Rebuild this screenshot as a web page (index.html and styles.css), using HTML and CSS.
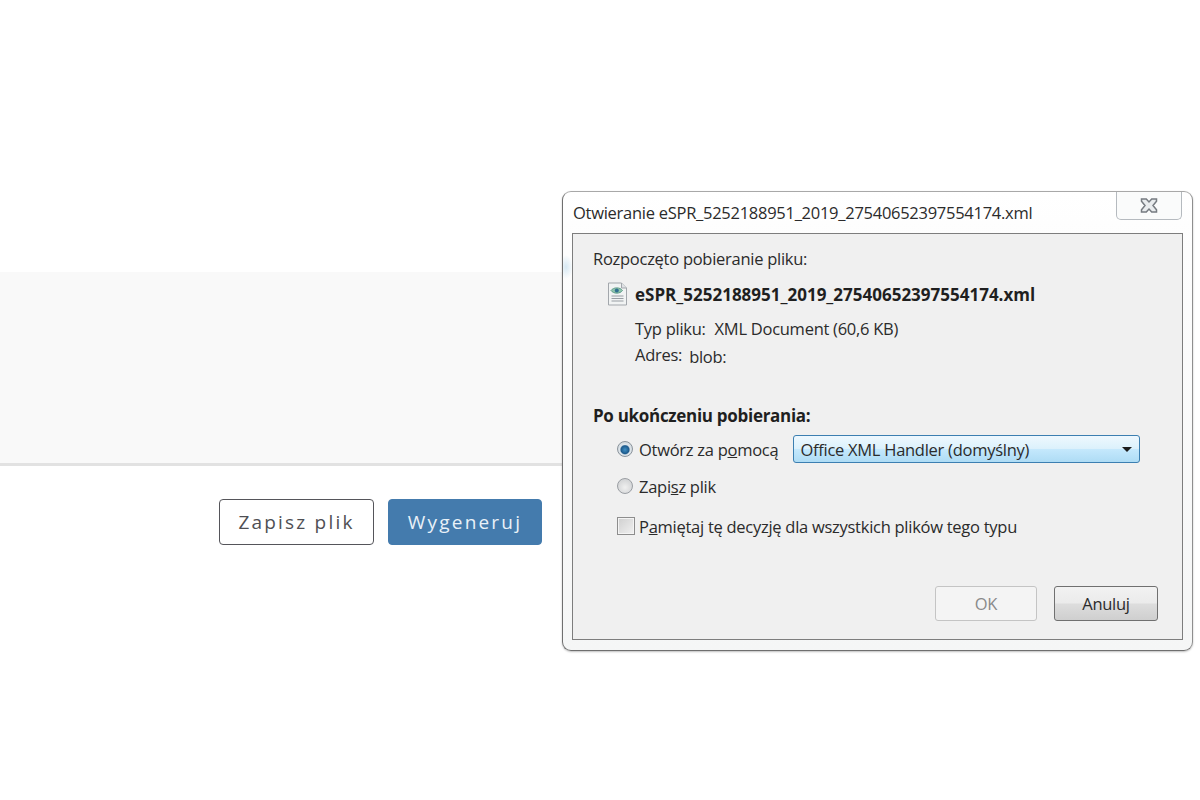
FILE: index.html
```html
<!DOCTYPE html>
<html lang="pl">
<head>
    <meta charset="UTF-8">
    <title>Wygeneruj eSPR</title>
    <link rel="stylesheet" href="styles.css">
</head>
<body>
    <div class="page">
        <div class="panel"></div>
        <div class="actions">
            <button class="btn btn-outline">Zapisz plik</button>
            <button class="btn btn-primary">Wygeneruj</button>
        </div>
    </div>

    <div class="dialog">
        <div class="titlebar">
            <span class="title">Otwieranie eSPR_5252188951_2019_27540652397554174.xml</span>
            <div class="close">
                <svg width="18" height="15" viewBox="0 0 18 15">
                    <path d="M1.500 1h4.800L9 4l2.700-3h4.800v2.200L13 7.500l3.500 4.300V14h-4.800L9 11l-2.700 3H1.500v-2.200L5 7.500 1.500 3.200z" fill="#e9ecee" stroke="#767b81" stroke-width="1.500"/>
                </svg>
            </div>
        </div>
        <div class="content">
            <div class="intro">Rozpoczęto pobieranie pliku:</div>
            <div class="file-row">
                <svg class="file-icon" width="21" height="24" viewBox="0 0 21 24">
                    <path d="M1.500 1h13l5 5v17h-18z" fill="#f1f3f3" stroke="#a3a7ac"/>
                    <path d="M14.500 1v5h5" fill="#dfe2e5" stroke="#a3a7ac"/>
                    <path d="M4 8.500C6.500 5 13 5 15.500 8.500 13 12 6.500 12 4 8.500z" fill="#8fc4ad" stroke="#5d9c88"/>
                    <circle cx="9.800" cy="8.500" r="2" fill="#2f6f8f"/>
                    <path d="M4.500 14h12M4.500 16.500h12M4.500 19h12" stroke="#989da3"/>
                </svg>
                <span class="file-name">eSPR_5252188951_2019_27540652397554174.xml</span>
            </div>
            <div class="meta meta-type">
                <span class="meta-label">Typ pliku:</span>
                <span>XML Document (60,6 KB)</span>
            </div>
            <div class="meta meta-address">
                <span class="meta-label">Adres:</span>
                <span class="meta-blob">blob:</span>
            </div>

            <div class="section-title">Po ukończeniu pobierania:</div>
            <div class="option option-open">
                <span class="radio radio-on"></span>
                <span class="option-label">Otwórz za p<u>o</u>mocą</span>
                <div class="select">
                    <span>Office XML Handler (domyślny)</span>
                    <span class="caret"></span>
                </div>
            </div>
            <div class="option option-save">
                <span class="radio"></span>
                <span class="option-label">Zapi<u>s</u>z plik</span>
            </div>
            <div class="option option-remember">
                <span class="checkbox"></span>
                <span class="option-label option-label-check">P<u>a</u>miętaj tę decyzję dla wszystkich plików tego typu</span>
            </div>

            <div class="dialog-buttons">
                <div class="win-btn win-btn-disabled">OK</div>
                <div class="win-btn">Anuluj</div>
            </div>
        </div>
    </div>
</body>
</html>
```

FILE: styles.css
```css
* {
    box-sizing: border-box;
}
body {
    margin: 0;
    background-color: #fff;
    font-family: 'Open Sans', sans-serif;
    overflow: hidden;
}
.page {
    padding-top: 272px;
}
.panel {
    height: 194px;
    margin-right: 10px;
    background-color: #f9f9f9;
    border-bottom: 3px solid #e2e2e2;
}
.actions {
    display: flex;
    justify-content: flex-end;
    gap: 14px;
    margin-top: 33px;
    padding-right: 658px;
}
.btn {
    width: 155px;
    height: 46px;
    border-radius: 4px;
    font-family: 'Open Sans', sans-serif;
    font-size: 19px;
    letter-spacing: 2.2px;
    padding: 0;
}
.btn-outline {
    background-color: #fff;
    border: 1px solid #55555a;
    color: #4f4f54;
}
.btn-primary {
    width: 154px;
    background-color: #447bad;
    border: 1px solid #447bad;
    color: #e9f1f8;
}

/* okno dialogowe lezy na stronie */
.dialog {
    position: absolute;
    left: 562px;
    top: 191px;
    width: 631px;
    height: 460px;
    padding: 0 9px 10px;
    background:
        radial-gradient(ellipse 7px 12px at 3px 75px, #d6e8f3, transparent),
        linear-gradient(#fff 0, #fdfdfd 60px, #f5f6f6 100%);
    border: 1px solid #6f6f6f;
    border-top-color: #a8a8a8;
    border-right-color: #8e8e8e;
    border-radius: 9px;
    box-shadow: 0 1px 2px rgba(0, 0, 0, 0.25);
    display: flex;
    flex-direction: column;
    color: #2b2b2b;
    font-size: 16.5px;
    letter-spacing: -0.27px;
}
.titlebar {
    height: 41px;
    flex-shrink: 0;
    display: flex;
    justify-content: space-between;
    align-items: flex-start;
}
.title {
    margin-top: 10px;
    margin-left: 1px;
    line-height: 21px;
}
.close {
    width: 66px;
    height: 28px;
    margin-right: 1px;
    background-color: #fafbfb;
    border: 1px solid #b5babf;
    border-top: none;
    border-radius: 0 0 5px 5px;
    display: flex;
    justify-content: center;
    padding-top: 6px;
}
.content {
    flex: 1;
    background-color: #f0f0f0;
    border: 1px solid #7d7d7d;
    padding-left: 20px;
}
.intro {
    margin-top: 14px;
    line-height: 21px;
}
.file-row {
    display: flex;
    align-items: center;
    margin-top: 13px;
    margin-left: 14px;
    height: 24px;
}
.file-name {
    margin-left: 7px;
    font-size: 17px;
    font-weight: 700;
    letter-spacing: 0;
    color: #1f1f1f;
}
.meta {
    display: flex;
    margin-left: 42px;
    line-height: 21px;
}
.meta-type {
    margin-top: 12px;
}
.meta-address {
    margin-top: 5px;
}
.meta-label {
    margin-right: 9px;
}
.meta-address .meta-label {
    margin-right: 7px;
}
.meta-blob {
    margin-top: 2px;
}
.section-title {
    margin-top: 38px;
    font-size: 17px;
    font-weight: 700;
    letter-spacing: -0.3px;
    line-height: 21px;
    color: #1f1f1f;
}
.option {
    display: flex;
    align-items: center;
    margin-left: 24px;
}
.option-open {
    margin-top: 9px;
    height: 28px;
}
.option-save {
    margin-top: 9px;
    height: 28px;
}
.option-remember {
    margin-top: 12px;
    height: 28px;
}
.option-label {
    margin-left: 6px;
    line-height: 21px;
}
.option-label-check {
    margin-left: 4px;
}
.radio {
    width: 16px;
    height: 16px;
    border-radius: 50%;
    border: 1px solid #9a9ea3;
    background: radial-gradient(circle at 50% 60%, #f0f0f0 0, #c9cbcd 100%);
    flex-shrink: 0;
}
.radio-on {
    background: radial-gradient(circle at 50% 55%, #3f8fc4 0, #1d5a8c 38%, #dfe6eb 50%, #c3cad0 100%);
    border-color: #8b949c;
}
.checkbox {
    width: 18px;
    height: 18px;
    border: 1px solid #8d8d8d;
    background: linear-gradient(135deg, #cfcfcf, #f1f1f1);
    box-shadow: inset 0 0 0 1px #f4f4f4;
    flex-shrink: 0;
}
.select {
    width: 347px;
    height: 28px;
    margin-left: 15px;
    padding: 0 7px 0 6px;
    display: flex;
    justify-content: space-between;
    align-items: center;
    background: linear-gradient(#eef8fe 0, #dcf1fc 48%, #c4e8fc 52%, #aedcf5 100%);
    border: 1px solid #3c7fb1;
    border-radius: 3px;
}
.caret {
    width: 0;
    height: 0;
    border-left: 5px solid transparent;
    border-right: 5px solid transparent;
    border-top: 5px solid #1c1c1c;
}
.dialog-buttons {
    display: flex;
    gap: 17px;
    margin-top: 46px;
    margin-left: 342px;
}
.win-btn {
    width: 104px;
    height: 35px;
    border: 1px solid #707070;
    border-radius: 3px;
    background: linear-gradient(#f2f2f2 0, #ebebeb 48%, #dddddd 52%, #cfcfcf 100%);
    display: flex;
    justify-content: center;
    align-items: center;
}
.win-btn-disabled {
    width: 102px;
    border-color: #c4c4c4;
    background: #f4f4f4;
    color: #8a8a8a;
}
```
